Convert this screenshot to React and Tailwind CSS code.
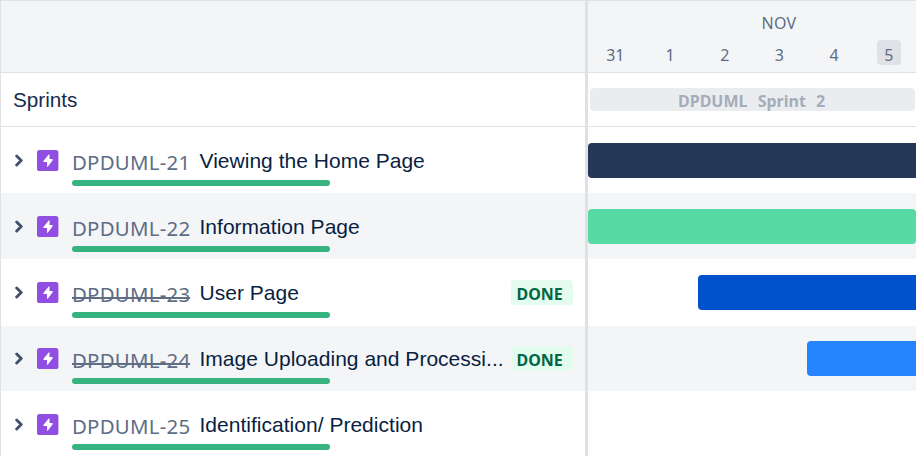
const sans = "font-['Liberation_Sans',Arial,sans-serif]";
const ui = "font-['Noto_Sans',sans-serif]";

const epics = [
  { id: 'DPDUML-21', title: 'Viewing the Home Page', row: 'h-[66px] bg-white', bar: 'bg-[#253858] rounded-l-[4px]' },
  { id: 'DPDUML-22', title: 'Information Page', row: 'h-[66px] bg-[#f4f5f7]', bar: 'bg-[#57d9a3] rounded-[4px]' },
  { id: 'DPDUML-23', title: 'User Page', done: true, row: 'h-[67px] bg-white', bar: 'bg-[#0052cc] rounded-l-[4px] ml-[109.7px]' },
  { id: 'DPDUML-24', title: 'Image Uploading and Processi...', done: true, row: 'h-[65px] bg-[#f4f5f7]', shift: '-mt-px', bar: 'bg-[#2684ff] rounded-l-[4px] ml-[219px]' },
  { id: 'DPDUML-25', title: 'Identification/ Prediction', row: 'h-[66px] bg-white' },
];

const days = ['31', '1', '2', '3', '4', '5'];

function Chevron() {
  return (
    <svg className="ml-[13px] mt-[27px] h-[13px] w-[10px] shrink-0" viewBox="0 0 10 13" fill="none" stroke="#42526e" strokeWidth="2.9" strokeLinecap="round" strokeLinejoin="round">
      <path d="M2.7 2 7.2 6.5 2.7 11" />
    </svg>
  );
}

function EpicIcon() {
  return (
    <svg className="ml-[13.3px] mt-[23px] h-[21px] w-[21.4px] shrink-0" viewBox="0 0 21.4 21" preserveAspectRatio="none">
      <rect width="21.4" height="21" rx="2.6" fill="#904ee2" />
      <path d="M11.7 4.5 6.4 11.1Q6.1 12 7 12h3v4.4q.2.8.9.2l4.8-6.4q.4-1-.6-1.2h-2.6V4.9q-.2-.8-.8-.4Z" fill="#fff" />
    </svg>
  );
}

function EpicRow({ epic }) {
  return (
    <div className={`shrink-0 ${epic.row}`}>
      <div className={`flex ${epic.shift || ''}`}>
        <Chevron />
        <EpicIcon />
        <div className="ml-[13.3px] w-[502px] shrink-0 pt-[20px]">
          <div className="flex h-[33px] whitespace-nowrap">
            <span className={`${ui} w-[127.5px] shrink-0 text-[20.4px] leading-[30px] tracking-[0.25px] text-[#5e6c84]`}>
              <span className="relative inline-block">
                {epic.id}
                {epic.done && <span className="absolute left-0 right-0 top-[18px] h-[1.5px] bg-[#5e6c84]" />}
              </span>
            </span>
            <span className={`${sans} w-[312px] shrink-0 text-[21px] leading-[28px] tracking-[0.02px] text-[#091e42]`}>{epic.title}</span>
            {epic.done && (
              <span className={`${ui} mt-px h-[25px] w-[62px] rounded-[4px] bg-[#e3fcef] pl-[5px] text-[16px] font-bold leading-[28px] text-[#006644]`}>DONE</span>
            )}
          </div>
          <div className="h-[6px] w-[258px] rounded-full bg-[#36b37e]" />
        </div>
      </div>
    </div>
  );
}

export default function App() {
  return (
    <div className={`${sans} flex h-[456px] w-[916px] overflow-hidden border-l border-t border-[#dfe1e6] bg-white`}>
      <div className="flex w-[584px] shrink-0 flex-col overflow-hidden">
        <div className="h-[72px] shrink-0 border-b border-[#dfe1e6] bg-[#f4f5f7]" />
        <div className="flex h-[54px] shrink-0 items-center border-b border-[#dfe1e6] pl-[12px] text-[20.7px] text-[#172b4d]">Sprints</div>
        {epics.map((epic) => <EpicRow key={epic.id} epic={epic} />)}
      </div>
      <div className="w-[3px] shrink-0 bg-[#dfe1e6]" />
      <div className="flex w-[328px] shrink-0 flex-col overflow-hidden">
        <div className={`${ui} h-[72px] shrink-0 border-b border-[#dfe1e6] bg-[#f4f5f7] text-[#5e6c84]`}>
          <div className="h-[39px] pl-[54px] pt-[10px] text-center text-[16px] leading-[24px] tracking-[0.3px]">NOV</div>
          <div className="flex">
            {days.map((day) => (
              <div key={day} className="flex w-[54.7px] shrink-0 justify-center">
                <span className={`h-[25px] min-w-[24px] rounded-[4px] text-center text-[16px] leading-[30px] ${day === '5' ? 'bg-[#dfe1e6]' : ''}`}>{day}</span>
              </div>
            ))}
          </div>
        </div>
        <div className="h-[54px] shrink-0 border-b border-[#dfe1e6] pl-[2px] pt-[15px]">
          <div className={`${ui} h-[23px] w-[325px] rounded-[4px] bg-[#ebecf0] pl-[88px] text-[16px] font-bold leading-[26px] text-[#a5adba] [word-spacing:6px]`}>DPDUML Sprint 2</div>
        </div>
        {epics.map((epic) => (
          <div key={epic.id} className={`shrink-0 ${epic.row}`}>
            <div className={`flex pt-[15.7px] ${epic.shift || ''}`}>
              {epic.bar && <div className={`h-[35.6px] grow ${epic.bar}`} />}
            </div>
          </div>
        ))}
      </div>
    </div>
  );
}
